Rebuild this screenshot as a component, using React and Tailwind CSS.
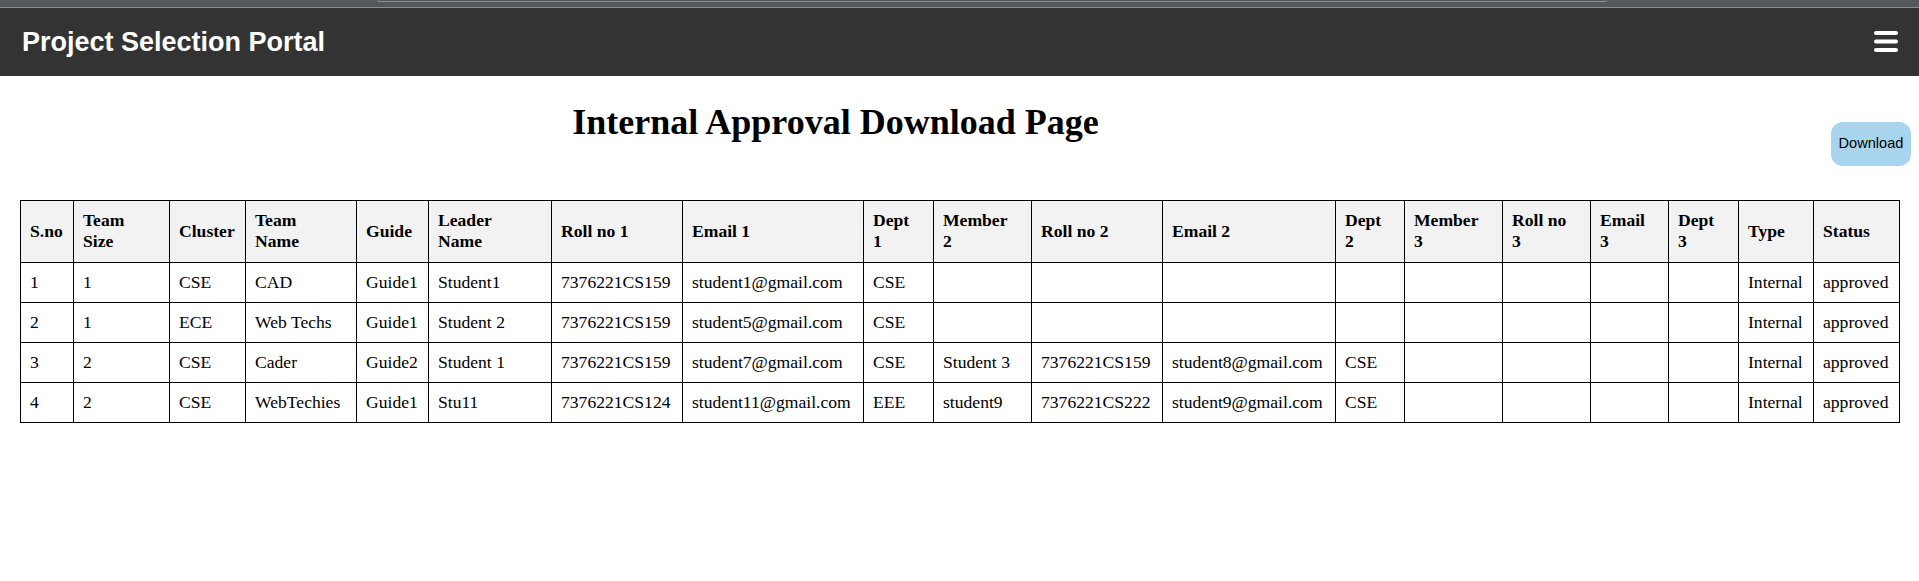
import React from 'react';

const headers = [
  ['S.no'],
  ['Team', 'Size'],
  ['Cluster'],
  ['Team', 'Name'],
  ['Guide'],
  ['Leader', 'Name'],
  ['Roll no 1'],
  ['Email 1'],
  ['Dept', '1'],
  ['Member', '2'],
  ['Roll no 2'],
  ['Email 2'],
  ['Dept', '2'],
  ['Member', '3'],
  ['Roll no', '3'],
  ['Email', '3'],
  ['Dept', '3'],
  ['Type'],
  ['Status'],
];

const widths = [53, 96, 76, 111, 72, 123, 131, 181, 70, 98, 131, 173, 69, 98, 88, 78, 70, 75, 86];

const rows = [
  ['1', '1', 'CSE', 'CAD', 'Guide1', 'Student1', '7376221CS159', 'student1@gmail.com', 'CSE', '', '', '', '', '', '', '', '', 'Internal', 'approved'],
  ['2', '1', 'ECE', 'Web Techs', 'Guide1', 'Student 2', '7376221CS159', 'student5@gmail.com', 'CSE', '', '', '', '', '', '', '', '', 'Internal', 'approved'],
  ['3', '2', 'CSE', 'Cader', 'Guide2', 'Student 1', '7376221CS159', 'student7@gmail.com', 'CSE', 'Student 3', '7376221CS159', 'student8@gmail.com', 'CSE', '', '', '', '', 'Internal', 'approved'],
  ['4', '2', 'CSE', 'WebTechies', 'Guide1', 'Stu11', '7376221CS124', 'student11@gmail.com', 'EEE', 'student9', '7376221CS222', 'student9@gmail.com', 'CSE', '', '', '', '', 'Internal', 'approved'],
];

function MenuIcon() {
  return (
    <svg width="24" height="22" viewBox="0 0 24 22" fill="none">
      <rect x="0" y="0" width="24" height="4" rx="2" fill="#fff" />
      <rect x="0" y="8.5" width="24" height="4" rx="2" fill="#fff" />
      <rect x="0" y="17" width="24" height="4" rx="2" fill="#fff" />
    </svg>
  );
}

export default function App() {
  return (
    <div className="min-h-[581px] bg-white text-black">
      {/* browser strip */}
      <div className="h-[8px] bg-[#56575c] border-b border-[#8b8b90]">
        <div className="ml-[377px] w-[1230px] h-[2px] border-b border-x border-[#8b8b90] rounded-b-[3px]" />
      </div>

      {/* navbar */}
      <div className="h-[68px] bg-[#333333] flex items-center justify-between pl-[22px] pr-[21px]">
        <span className="text-white font-bold text-[27px] font-['Liberation_Sans',Arial,sans-serif]">
          Project Selection Portal
        </span>
        <MenuIcon />
      </div>

      {/* title row */}
      <div className="flex items-end">
        <h1 className="flex-1 text-center pr-[160px] mt-[25.5px] mb-[24px] text-[36px] leading-[40px] font-bold font-['Liberation_Serif','Times_New_Roman',serif]">
          Internal Approval Download Page
        </h1>
        <button className="mr-[8px] h-[44px] w-[80px] rounded-[12px] bg-[#a8d4ee] text-[14.6px] text-black font-['Liberation_Sans',Arial,sans-serif]">
          Download
        </button>
      </div>

      {/* table */}
      <div className="px-[20px] mt-[34px]">
        <table className="w-full table-fixed border-collapse font-['Liberation_Serif','Times_New_Roman',serif] text-[17.6px] leading-[21px]">
          <colgroup>
            {widths.map((w, i) => (
              <col key={i} style={{ width: w }} />
            ))}
          </colgroup>
          <thead>
            <tr className="bg-[#f2f2f2]">
              {headers.map((h, i) => (
                <th key={i} className="border border-black px-[9px] py-[9.5px] text-left font-bold align-middle whitespace-nowrap">
                  {h.map((line, j) => (
                    <React.Fragment key={j}>
                      {j > 0 && <br />}
                      {line}
                    </React.Fragment>
                  ))}
                </th>
              ))}
            </tr>
          </thead>
          <tbody>
            {rows.map((r, i) => (
              <tr key={i}>
                {r.map((c, j) => (
                  <td key={j} className="border border-black px-[9px] py-[9px] align-middle whitespace-nowrap">
                    {c}
                  </td>
                ))}
              </tr>
            ))}
          </tbody>
        </table>
      </div>
    </div>
  );
}
